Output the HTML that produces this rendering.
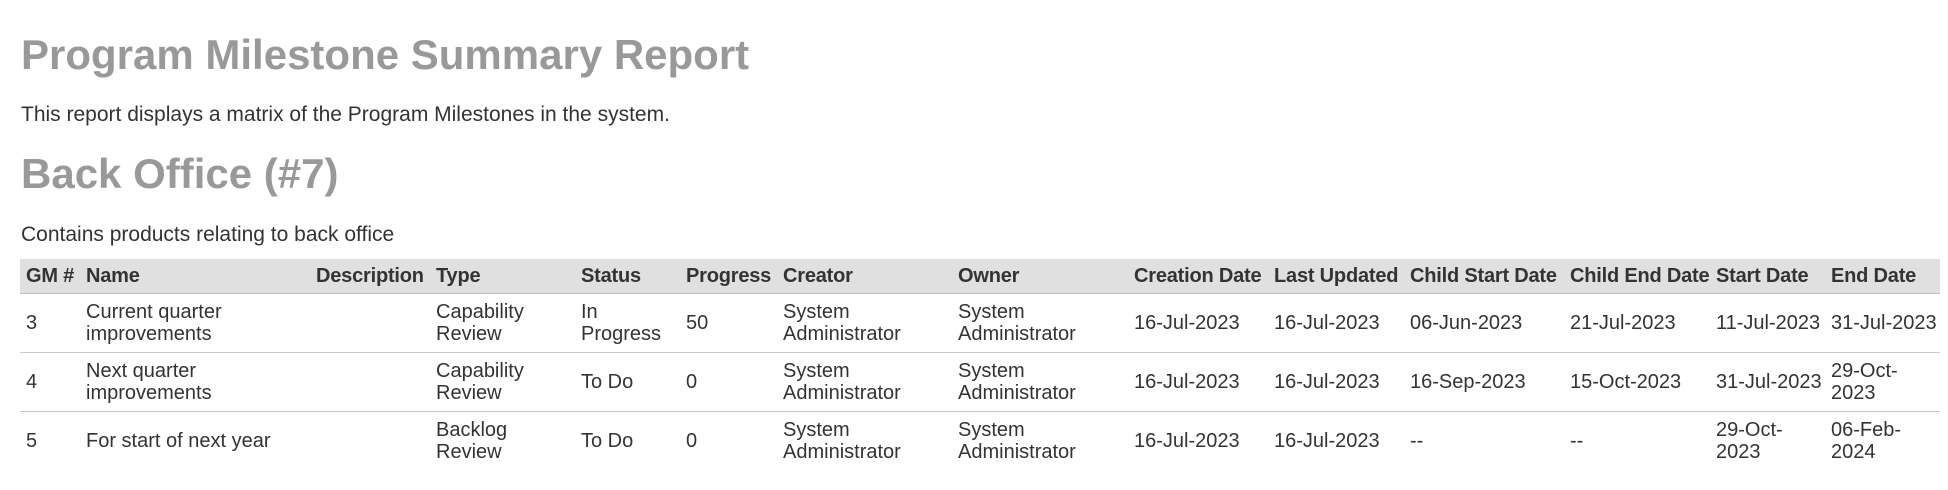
<!DOCTYPE html>
<html><head><meta charset="utf-8"><style>
html,body{margin:0;padding:0;background:#fff;width:1948px;height:490px;overflow:hidden;font-family:"Liberation Sans",Arial,sans-serif;color:#333;}
.a{position:absolute;left:21px;margin:0;white-space:nowrap;}
h1,h2{color:#999;font-weight:bold;}
h1{top:30px;font-size:42px;line-height:50px;}
h2{top:149px;font-size:42px;line-height:50px;}
p{font-size:21px;line-height:24px;}
table{position:absolute;left:20px;top:259px;width:1920px;border-collapse:collapse;table-layout:fixed;font-size:20px;line-height:22px;}
th{background:#e0e0e0;text-align:left;font-weight:bold;padding:6px 6px;border-bottom:1px solid #c0c0c0;white-space:nowrap;overflow:visible;letter-spacing:-0.2px;}
td{padding:7px 6px;vertical-align:middle;border-bottom:1px solid #c8c8c8;white-space:nowrap;}
tr:last-child td{border-bottom:none;}
</style></head><body>
<h1 class="a">Program Milestone Summary Report</h1>
<p class="a" style="top:103px">This report displays a matrix of the Program Milestones in the system.</p>
<h2 class="a">Back Office (#7)</h2>
<p class="a" style="top:223px">Contains products relating to back office</p>
<table>
<colgroup><col style="width:60px"><col style="width:230px"><col style="width:120px"><col style="width:145px"><col style="width:105px"><col style="width:97px"><col style="width:175px"><col style="width:176px"><col style="width:140px"><col style="width:136px"><col style="width:160px"><col style="width:146px"><col style="width:115px"><col style="width:115px"></colgroup>
<tr><th>GM #</th><th>Name</th><th>Description</th><th>Type</th><th>Status</th><th>Progress</th><th>Creator</th><th>Owner</th><th>Creation Date</th><th>Last Updated</th><th>Child Start Date</th><th>Child End Date</th><th>Start Date</th><th>End Date</th></tr>
<tr><td>3</td><td>Current quarter<br>improvements</td><td></td><td>Capability<br>Review</td><td>In<br>Progress</td><td>50</td><td>System<br>Administrator</td><td>System<br>Administrator</td><td>16-Jul-2023</td><td>16-Jul-2023</td><td>06-Jun-2023</td><td>21-Jul-2023</td><td>11-Jul-2023</td><td>31-Jul-2023</td></tr>
<tr><td>4</td><td>Next quarter<br>improvements</td><td></td><td>Capability<br>Review</td><td>To Do</td><td>0</td><td>System<br>Administrator</td><td>System<br>Administrator</td><td>16-Jul-2023</td><td>16-Jul-2023</td><td>16-Sep-2023</td><td>15-Oct-2023</td><td>31-Jul-2023</td><td>29-Oct-<br>2023</td></tr>
<tr><td>5</td><td>For start of next year</td><td></td><td>Backlog<br>Review</td><td>To Do</td><td>0</td><td>System<br>Administrator</td><td>System<br>Administrator</td><td>16-Jul-2023</td><td>16-Jul-2023</td><td>--</td><td>--</td><td>29-Oct-<br>2023</td><td>06-Feb-<br>2024</td></tr>
</table>
</body></html>
